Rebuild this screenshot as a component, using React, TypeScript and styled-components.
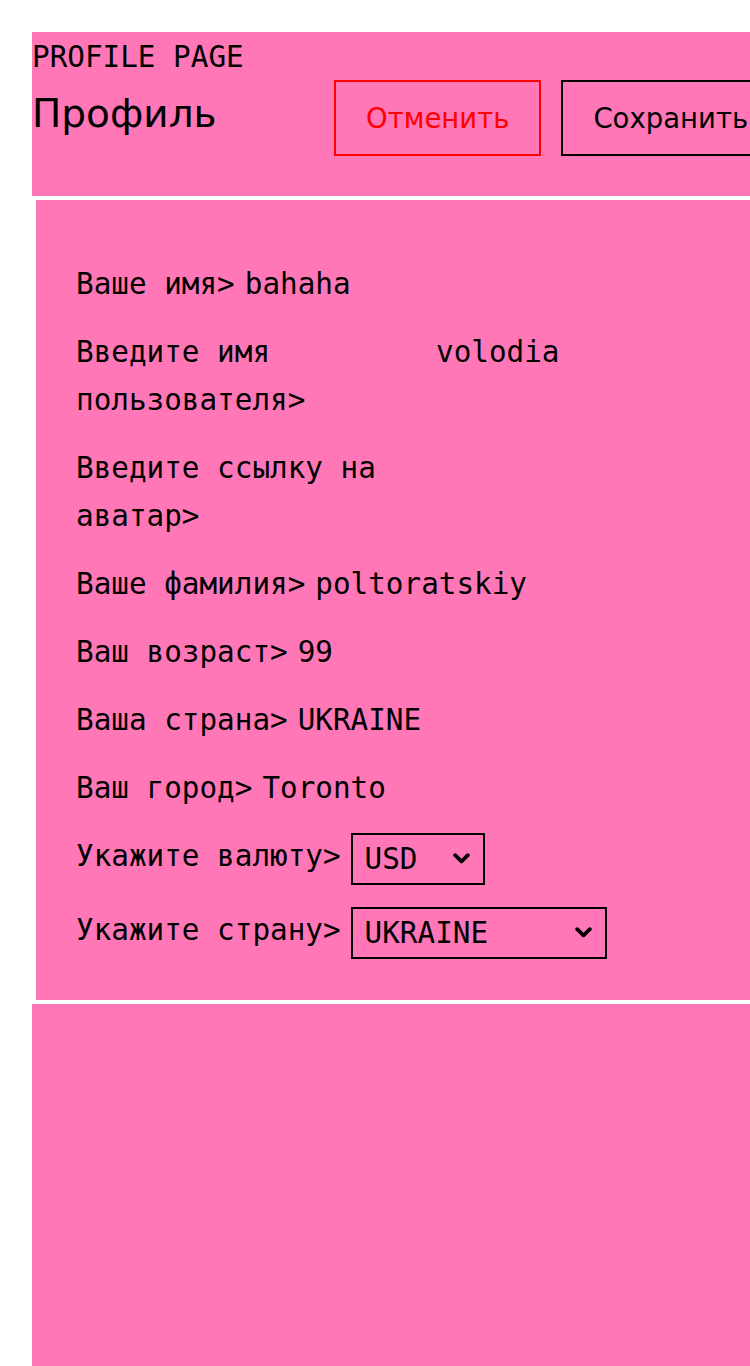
import React from "react";
import styled, { createGlobalStyle } from "styled-components";

const PINK = "#ff77b7";

const GlobalStyle = createGlobalStyle`
  html, body {
    overflow-x: hidden;
  }
  body {
    margin: 32px 0 0 32px;
    background: #ffffff;
    color: #000000;
    font-family: "DejaVu Sans Mono", monospace;
  }
  * {
    box-sizing: border-box;
  }
`;

const Page = styled.div`
  width: 820px;
  min-height: calc(100vh - 32px);
  display: flex;
  flex-direction: column;
`;

const Header = styled.header`
  background: ${PINK};
  padding: 8px 0 40px;
`;

const Kicker = styled.div`
  font-family: "DejaVu Sans Mono", monospace;
  font-size: 29.3px;
  line-height: 34px;
`;

const HeaderRow = styled.div`
  display: flex;
  align-items: flex-start;
  margin-top: 6px;
`;

const Title = styled.h1`
  flex: 0 0 302px;
  margin: 11px 0 0;
  font-family: "DejaVu Sans", sans-serif;
  font-size: 39px;
  font-weight: normal;
  line-height: normal;
`;

const Actions = styled.div`
  display: flex;
  gap: 20px;
`;

const ActionButton = styled.button<{ $tone: string }>`
  height: 76px;
  padding: 0 30px;
  border: 2px solid ${(p) => p.$tone};
  border-radius: 0;
  background: transparent;
  color: ${(p) => p.$tone};
  font-family: "DejaVu Sans", sans-serif;
  font-size: 27.5px;
  line-height: normal;
  white-space: nowrap;
  cursor: pointer;
`;

const Form = styled.form`
  background: ${PINK};
  border: 4px solid #ffffff;
  border-right: none;
  padding: 60px 40px 40px;
  display: flex;
  flex-direction: column;
  gap: 20px;
`;

const Row = styled.div`
  display: flex;
  align-items: flex-start;
  gap: 10px;
  font-size: 29.3px;
  line-height: 48px;
`;

const Label = styled.span`
  max-width: 350px;
`;

const Value = styled.span`
  white-space: nowrap;
`;

const SelectBox = styled.div`
  position: relative;
  display: flex;
  margin: 1px 0;
`;

const Select = styled.select<{ $w: number }>`
  appearance: none;
  -webkit-appearance: none;
  width: ${(p) => p.$w}px;
  height: 52px;
  padding: 0 0 0 12px;
  border: 2px solid #000000;
  border-radius: 0;
  background: transparent;
  color: #000000;
  font-family: "DejaVu Sans Mono", monospace;
  font-size: 29.3px;
`;

const Chevron = styled.svg`
  position: absolute;
  right: 15px;
  top: 20px;
  width: 17px;
  height: 11px;
  pointer-events: none;
`;

const Footer = styled.footer`
  flex: 1;
  background: ${PINK};
`;

const fields: { label: string; value: string }[] = [
  { label: "Ваше имя>", value: "bahaha" },
  { label: "Введите имя пользователя>", value: "volodia" },
  { label: "Введите ссылку на аватар>", value: "" },
  { label: "Ваше фамилия>", value: "poltoratskiy" },
  { label: "Ваш возраст>", value: "99" },
  { label: "Ваша страна>", value: "UKRAINE" },
  { label: "Ваш город>", value: "Toronto" },
];

function Dropdown({
  width,
  value,
  options,
}: {
  width: number;
  value: string;
  options: string[];
}) {
  return (
    <SelectBox>
      <Select $w={width} defaultValue={value}>
        {options.map((o) => (
          <option key={o} value={o}>
            {o}
          </option>
        ))}
      </Select>
      <Chevron viewBox="0 0 17 11" aria-hidden="true">
        <polyline
          points="2.2,2.2 8.5,8.5 14.8,2.2"
          fill="none"
          stroke="#000"
          strokeWidth="3.8"
          strokeLinecap="round"
          strokeLinejoin="round"
        />
      </Chevron>
    </SelectBox>
  );
}

export default function App() {
  return (
    <>
      <GlobalStyle />
      <Page>
        <Header>
          <Kicker>PROFILE PAGE</Kicker>
          <HeaderRow>
            <Title>Профиль</Title>
            <Actions>
              <ActionButton type="button" $tone="#ff0000">
                Отменить
              </ActionButton>
              <ActionButton type="button" $tone="#000000">
                Сохранить
              </ActionButton>
            </Actions>
          </HeaderRow>
        </Header>
        <Form onSubmit={(e) => e.preventDefault()}>
          {fields.map((f) => (
            <Row key={f.label}>
              <Label>{f.label}</Label>
              {f.value && <Value>{f.value}</Value>}
            </Row>
          ))}
          <Row>
            <Label>Укажите валюту&gt;</Label>
            <Dropdown width={134} value="USD" options={["USD", "EUR", "UAH"]} />
          </Row>
          <Row>
            <Label>Укажите страну&gt;</Label>
            <Dropdown
              width={256}
              value="UKRAINE"
              options={["UKRAINE", "CANADA", "USA"]}
            />
          </Row>
        </Form>
        <Footer />
      </Page>
    </>
  );
}
